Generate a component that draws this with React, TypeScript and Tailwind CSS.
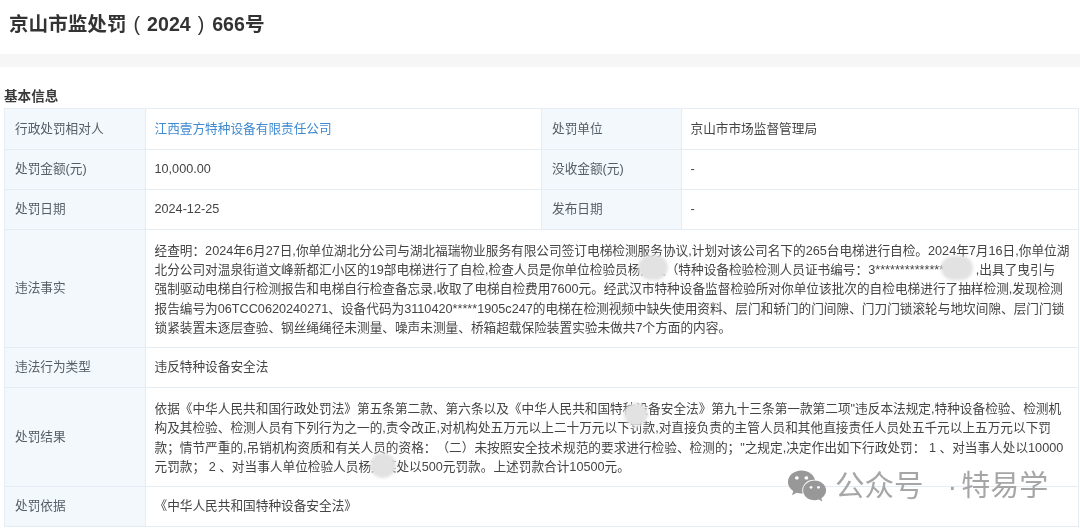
import { ReactNode } from 'react';
import { FaWeixin } from 'react-icons/fa';

const font = { label: 'text-[#555e66]', value: 'text-[#444]' };

function Label({ children }: { children: ReactNode }) {
  return (
    <td className={`border border-[#e4edf6] bg-[#f3f8fc] pl-[10px] align-middle ${font.label}`}>
      {children}
    </td>
  );
}

function Value({ children, colSpan }: { children: ReactNode; colSpan?: number }) {
  return (
    <td colSpan={colSpan} className={`border border-[#e4edf6] bg-white pl-[8.5px] align-middle ${font.value}`}>
      {children}
    </td>
  );
}

function Lines({ lines }: { lines: string[] }) {
  return (
    <div className="pt-[3px] leading-[19.3px]">
      {lines.map((line) => (
        <div key={line} className="whitespace-pre">
          {line}
        </div>
      ))}
    </div>
  );
}

function Smudge({ className }: { className: string }) {
  return <div className={`absolute rounded-full bg-[#e2e2e2] blur-[1.5px] ${className}`} />;
}

const facts = [
  '经查明：2024年6月27日,你单位湖北分公司与湖北福瑞物业服务有限公司签订电梯检测服务协议,计划对该公司名下的265台电梯进行自检。2024年7月16日,你单位湖',
  '北分公司对温泉街道文峰新都汇小区的19部电梯进行了自检,检查人员是你单位检验员杨某某（特种设备检验检测人员证书编号：3**************\u2003\u2003\u2002,出具了曳引与',
  '强制驱动电梯自行检测报告和电梯自行检查备忘录,收取了电梯自检费用7600元。经武汉市特种设备监督检验所对你单位该批次的自检电梯进行了抽样检测,发现检测',
  '报告编号为06TCC0620240271、设备代码为3110420*****1905c247的电梯在检测视频中缺失使用资料、层门和轿门的门间隙、门刀门锁滚轮与地坎间隙、层门门锁',
  '锁紧装置未逐层查验、钢丝绳绳径未测量、噪声未测量、桥箱超载保险装置实验未做共7个方面的内容。',
];

const result = [
  '依据《中华人民共和国行政处罚法》第五条第二款、第六条以及《中华人民共和国特种设备安全法》第九十三条第一款第二项"违反本法规定,特种设备检验、检测机',
  '构及其检验、检测人员有下列行为之一的,责令改正,对机构处五万元以上二十万元以下罚款,对直接负责的主管人员和其他直接责任人员处五千元以上五万元以下罚',
  '款；情节严重的,吊销机构资质和有关人员的资格：\u200b（二）未按照安全技术规范的要求进行检验、检测的；"之规定,决定作出如下行政处罚： 1 、对当事人处以10000',
  '元罚款； 2 、对当事人单位检验人员杨某某处以500元罚款。上述罚款合计10500元。',
];

export default function App() {
  return (
    <div className="relative h-[529px] w-[1080px] overflow-hidden bg-white font-['Liberation_Sans','Noto_Sans_CJK_SC',sans-serif] text-[12.67px] blur-[0.4px]">
      <h1 className="h-[54px] pl-[9px] pt-[10px] text-[19.6px] font-bold leading-[28px] text-[#333]">
        京山市监处罚<span className="ml-[7px] font-normal">(</span>
        <span className="ml-[7px] mr-[7px]">2024</span>
        <span className="mr-[8px] font-normal">)</span>666号
      </h1>
      <div className="h-[13px] bg-[#f6f6f6]" />
      <h2 className="pl-1 pt-[20px] text-[13.6px] font-bold leading-[20px] text-[#3a3a3a]">基本信息</h2>
      <div className="pl-1 pt-[1px]">
        <table className="w-[1075px] table-fixed border-collapse">
          <colgroup>
            <col className="w-[141px]" />
            <col className="w-[396px]" />
            <col className="w-[140px]" />
            <col />
          </colgroup>
          <tbody>
            <tr className="h-[41px]">
              <Label>行政处罚相对人</Label>
              <Value>
                <span className="text-[#3f8ad0]">江西壹方特种设备有限责任公司</span>
              </Value>
              <Label>处罚单位</Label>
              <Value>京山市市场监督管理局</Value>
            </tr>
            <tr className="h-[40px]">
              <Label>处罚金额(元)</Label>
              <Value>10,000.00</Value>
              <Label>没收金额(元)</Label>
              <Value>-</Value>
            </tr>
            <tr className="h-[40px]">
              <Label>处罚日期</Label>
              <Value>2024-12-25</Value>
              <Label>发布日期</Label>
              <Value>-</Value>
            </tr>
            <tr className="h-[118px]">
              <Label>违法事实</Label>
              <Value colSpan={3}>
                <Lines lines={facts} />
              </Value>
            </tr>
            <tr className="h-[40px]">
              <Label>违法行为类型</Label>
              <Value colSpan={3}>违反特种设备安全法</Value>
            </tr>
            <tr className="h-[99px]">
              <Label>处罚结果</Label>
              <Value colSpan={3}>
                <Lines lines={result} />
              </Value>
            </tr>
            <tr className="h-[40px]">
              <Label>处罚依据</Label>
              <Value colSpan={3}>《中华人民共和国特种设备安全法》</Value>
            </tr>
          </tbody>
        </table>
      </div>

      <Smudge className="left-[638px] top-[255px] h-[25px] w-[30px]" />
      <Smudge className="left-[941px] top-[256px] h-[24px] w-[32px]" />
      <Smudge className="left-[370px] top-[453px] h-[25px] w-[26px]" />
      <Smudge className="left-[624px] top-[403px] h-[23px] w-[24px]" />

      <div className="absolute left-[787px] top-[468px] flex items-center text-[#a6a6a6]">
        <FaWeixin className="h-[36px] w-[40px] text-[#989898]" />
        <span className="ml-[8px] whitespace-nowrap text-[29.5px] leading-[36px]">公众号</span>
        <span className="ml-[24px] text-[29px] leading-[36px]">·</span>
        <span className="ml-[4px] whitespace-nowrap text-[29px] leading-[36px]">特易学</span>
      </div>
    </div>
  );
}
